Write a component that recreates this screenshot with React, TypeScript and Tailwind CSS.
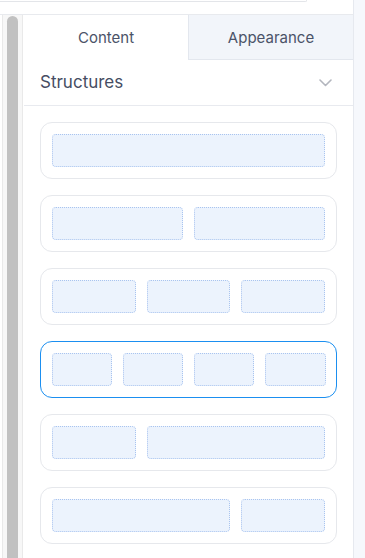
import React from "react";

const Block = ({ span = 1 }: { span?: number }) => (
  <div
    className={
      "h-[33px] rounded-[4px] border border-dotted border-[#a9c4ef] bg-[#ecf3fd] " +
      (span === 2 ? "col-span-2" : "col-span-1")
    }
  />
);

const Card = ({
  cols,
  children,
  selected = false,
}: {
  cols: 1 | 2 | 3 | 4;
  children: React.ReactNode;
  selected?: boolean;
}) => {
  const grid =
    cols === 1
      ? "grid-cols-1"
      : cols === 2
      ? "grid-cols-2"
      : cols === 3
      ? "grid-cols-3"
      : "grid-cols-4";
  return (
    <div
      className={
        "rounded-[12px] bg-white " +
        (selected
          ? "border-[1.5px] border-[#1b8ff0] px-[10.5px] py-[11px]"
          : "border border-[#e6e8ec] p-[11px]")
      }
    >
      <div className={"grid gap-[11px] " + grid}>{children}</div>
    </div>
  );
};

export default function App() {
  return (
    <div
      className="w-[365px] h-[558px] overflow-hidden bg-white flex"
      style={{ fontFamily: "Inter, 'Noto Sans', sans-serif" }}
    >
      <div className="w-[354px] h-full flex flex-col border-r border-[#e6e9ef]">
        <div className="h-[15px] shrink-0 border-b border-[#e8eaee]">
          <div className="w-[307px] h-[2px] border-b border-r border-[#e3e5e9] rounded-br-[6px]" />
        </div>
        <div className="flex flex-1 min-h-0">
          <div className="w-[24px] shrink-0 pl-[2px] h-full">
            <div className="w-[21px] h-full border-l border-r border-[#e9e9e9] bg-[#f7f7f7] px-[4px] pt-[1px]">
              <div className="w-[11px] h-full rounded-t-[6px] bg-[#c1c1c1]" />
            </div>
          </div>
          <div className="flex-1 min-w-0 flex flex-col">
            <div className="flex h-[45px] shrink-0">
              <div className="w-[164px] flex items-center justify-center pt-[2px] text-[15px] text-[#4b5368] bg-white">
                Content
              </div>
              <div className="flex-1 flex items-center justify-center pt-[2px] text-[15px] text-[#4b5368] bg-[#f2f5fa] border-l border-b border-[#e3e7ee]">
                Appearance
              </div>
            </div>
            <div className="h-[46px] shrink-0 flex items-center justify-between pl-4 pr-[21px] pt-[1px] border-b border-[#e8eaef]">
              <span className="text-[17px] text-[#464d63]">Structures</span>
              <svg width="13" height="8" viewBox="0 0 13 8" fill="none">
                <polyline
                  points="1,1 6.5,6.5 12,1"
                  stroke="#b3b6be"
                  strokeWidth="1.6"
                  strokeLinecap="round"
                  strokeLinejoin="round"
                />
              </svg>
            </div>
            <div className="px-4 pt-4 flex flex-col gap-4">
              <Card cols={1}>
                <Block />
              </Card>
              <Card cols={2}>
                <Block />
                <Block />
              </Card>
              <Card cols={3}>
                <Block />
                <Block />
                <Block />
              </Card>
              <Card cols={4} selected>
                <Block />
                <Block />
                <Block />
                <Block />
              </Card>
              <Card cols={3}>
                <Block />
                <Block span={2} />
              </Card>
              <Card cols={3}>
                <Block span={2} />
                <Block />
              </Card>
            </div>
          </div>
        </div>
      </div>
      <div className="flex-1 h-full bg-[#f6f8fc]" />
    </div>
  );
}
